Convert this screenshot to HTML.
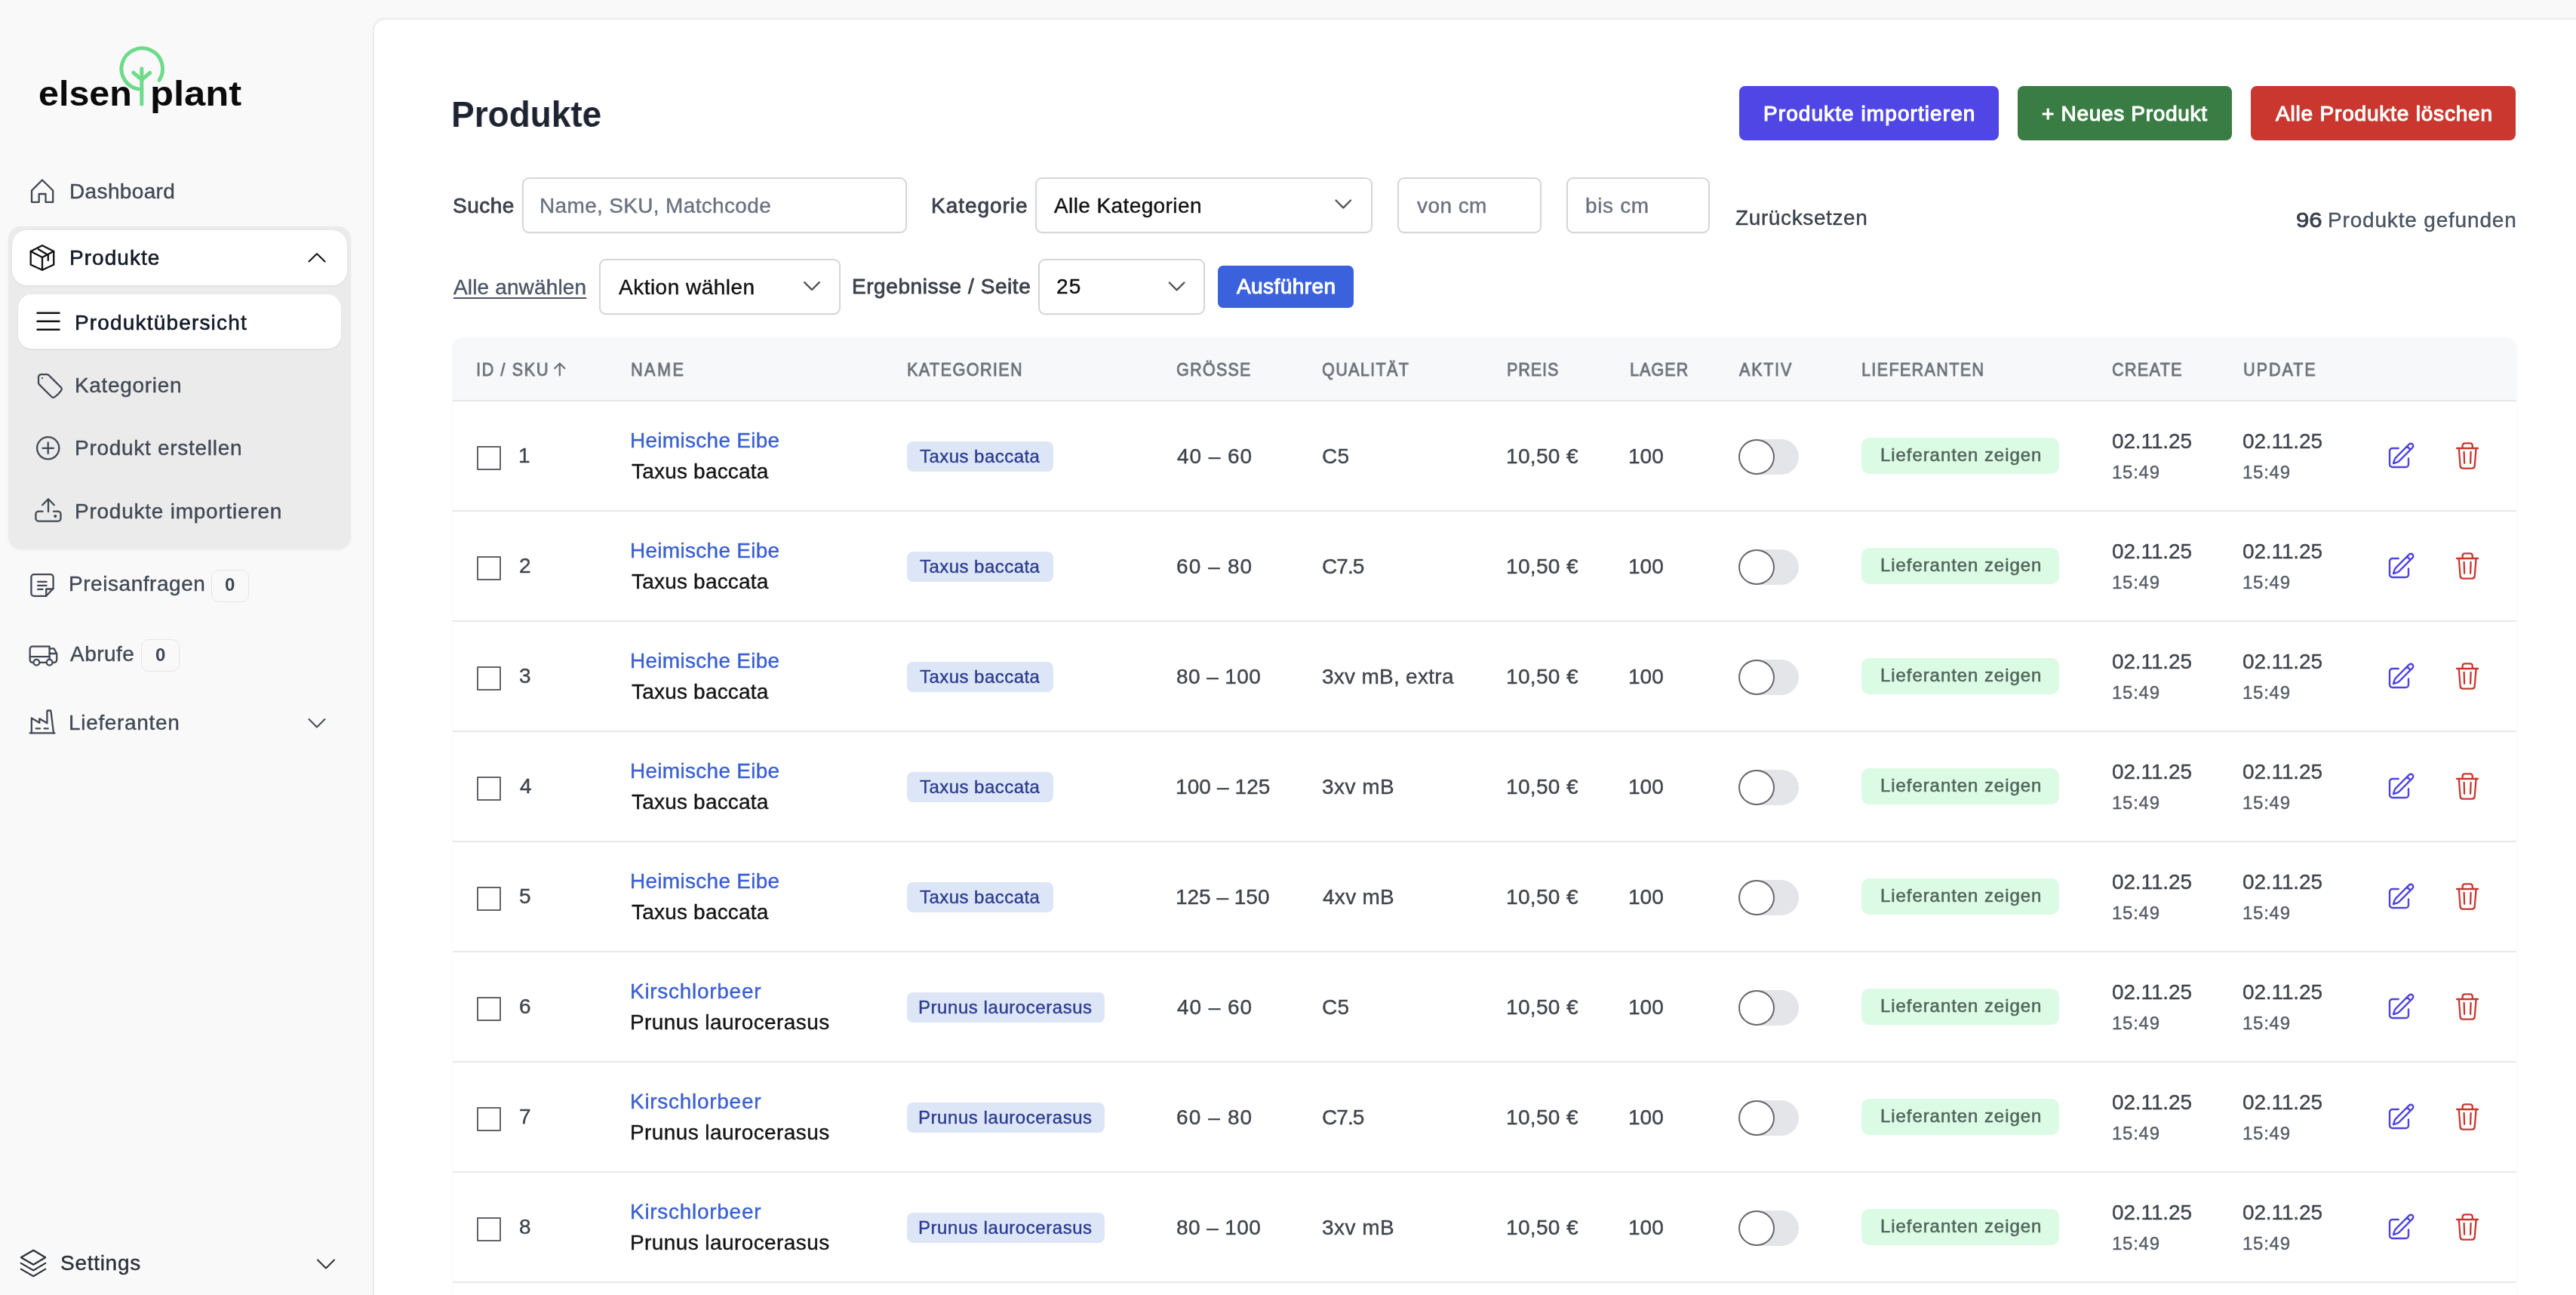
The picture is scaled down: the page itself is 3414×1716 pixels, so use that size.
<!DOCTYPE html>
<html><head><meta charset="utf-8"><title>Produkte</title>
<style>
html,body{margin:0;padding:0;}
body{width:3414px;height:1716px;overflow:hidden;position:relative;background:#f9f9f9;font-family:"Liberation Sans", sans-serif;-webkit-font-smoothing:antialiased;}
.t{position:absolute;white-space:pre;will-change:transform;}
</style></head><body>
<svg style="position:absolute;left:0;top:0;overflow:visible" width="1" height="1" fill="none" stroke="#6edb8a" stroke-width="5" stroke-linecap="round" stroke-linejoin="round"><path d="M183.5 118.1 A 27.3 27.3 0 1 1 211.1 106.1"/><path d="M187.8 91V138"/><path d="M176.8 96.5L187.8 105.5L198.8 96.5"/></svg>
<div class="t" style="left:50.55px;top:77.70px;height:92px;line-height:92px;font-size:46px;font-weight:bold;color:#0b0b0b;letter-spacing:0.000px;transform:scaleX(1.0530);transform-origin:0 0;">elsen</div>
<div class="t" style="left:199.19px;top:77.70px;height:92px;line-height:92px;font-size:46px;font-weight:bold;color:#0b0b0b;letter-spacing:0.000px;transform:scaleX(1.1027);transform-origin:0 0;">plant</div>
<svg style="position:absolute;left:0;top:0;overflow:visible" width="1" height="1" fill="none" stroke="#414855" stroke-width="2.3" stroke-linecap="round" stroke-linejoin="round"><path d="M42 252.5L56 238.5L70.2 252.5V267.8H60.5V257H51.7V267.8H42Z"/></svg>
<div class="t" style="left:92.27px;top:226.10px;height:56px;line-height:56px;font-size:28px;font-weight:normal;color:#414855;letter-spacing:0.362px;-webkit-text-stroke:0.4px #414855;">Dashboard</div>
<div style="position:absolute;left:11px;top:300px;width:454px;height:428px;background:#ebebeb;border-radius:17px;box-shadow:0 1px 4px rgba(0,0,0,.04);"></div>
<div style="position:absolute;left:16px;top:305px;width:444px;height:73px;background:#fff;border-radius:20px;box-shadow:0 1px 3px rgba(0,0,0,.07);"></div>
<svg style="position:absolute;left:0;top:0;overflow:visible" width="1" height="1" fill="none" stroke="#111" stroke-width="2.3" stroke-linecap="round" stroke-linejoin="round"><path d="M56 325.2L71.2 333V350.8L56 357.8L40.7 350.8V333Z"/><path d="M40.7 333L56 341L71.2 333M56 341V357.8"/><path d="M50.8 330.3L63.8 338V345"/></svg>
<div class="t" style="left:92.30px;top:314.10px;height:56px;line-height:56px;font-size:28px;font-weight:normal;color:#111827;letter-spacing:1.043px;-webkit-text-stroke:0.6px #111827;">Produkte</div>
<svg style="position:absolute;left:0;top:0;overflow:visible" width="1" height="1" fill="none" stroke="#111" stroke-width="2" stroke-linecap="round" stroke-linejoin="round"><path d="M409.5 346.5L420 336.3L430.5 346.5"/></svg>
<div style="position:absolute;left:24px;top:390px;width:428px;height:72px;background:#fff;border-radius:18px;box-shadow:0 1px 3px rgba(0,0,0,.07);"></div>
<svg style="position:absolute;left:0;top:0;overflow:visible" width="1" height="1" fill="none" stroke="#111" stroke-width="2.4" stroke-linecap="round" stroke-linejoin="round"><path d="M49.5 414.8H78.5M49.5 425.8H78.5M49.5 436.8H78.5"/></svg>
<div class="t" style="left:99.30px;top:399.50px;height:56px;line-height:56px;font-size:28px;font-weight:normal;color:#111827;letter-spacing:1.171px;-webkit-text-stroke:0.6px #111827;">Produktübersicht</div>
<svg style="position:absolute;left:46px;top:491px;overflow:visible" width="40" height="40" viewBox="0 0 24 24" fill="none" stroke="#414855" stroke-width="1.35" stroke-linecap="round" stroke-linejoin="round"><path d="M9.568 3H5.25A2.25 2.25 0 0 0 3 5.25v4.318c0 .597.237 1.17.659 1.591l9.581 9.581c.699.699 1.78.872 2.607.33a18.095 18.095 0 0 0 5.223-5.223c.542-.827.369-1.908-.33-2.607L11.16 3.66A2.25 2.25 0 0 0 9.568 3Z"/><path d="M6 6h.008v.008H6V6Z"/></svg>
<div class="t" style="left:99.20px;top:482.50px;height:56px;line-height:56px;font-size:28px;font-weight:normal;color:#414855;letter-spacing:0.671px;-webkit-text-stroke:0.4px #414855;">Kategorien</div>
<svg style="position:absolute;left:0;top:0;overflow:visible" width="1" height="1" fill="none" stroke="#414855" stroke-width="2.3" stroke-linecap="round" stroke-linejoin="round"><circle cx="63.7" cy="593.8" r="14.6"/><path d="M63.7 586.5V601.1M56.4 593.8H71"/></svg>
<div class="t" style="left:99.20px;top:566.20px;height:56px;line-height:56px;font-size:28px;font-weight:normal;color:#414855;letter-spacing:0.716px;-webkit-text-stroke:0.4px #414855;">Produkt erstellen</div>
<svg style="position:absolute;left:0;top:0;overflow:visible" width="1" height="1" fill="none" stroke="#414855" stroke-width="2.3" stroke-linecap="round" stroke-linejoin="round"><path d="M56.6 677.7H51A3.6 3.6 0 0 0 47.4 681.3V687A3.6 3.6 0 0 0 51 690.6H76.9A3.6 3.6 0 0 0 80.5 687V681.3A3.6 3.6 0 0 0 76.9 677.7H71"/><path d="M64 678V661.5M56.2 669.3L64 661.3L71.8 669.3"/><circle cx="73.3" cy="684" r="0.9" fill="#414855"/></svg>
<div class="t" style="left:99.20px;top:649.90px;height:56px;line-height:56px;font-size:28px;font-weight:normal;color:#414855;letter-spacing:0.762px;-webkit-text-stroke:0.4px #414855;">Produkte importieren</div>
<svg style="position:absolute;left:0;top:0;overflow:visible" width="1" height="1" fill="none" stroke="#414855" stroke-width="2.3" stroke-linecap="round" stroke-linejoin="round"><path d="M61.2 789.8H45A3.6 3.6 0 0 1 41.4 786.2V764.8A3.6 3.6 0 0 1 45 761.2H67A3.6 3.6 0 0 1 70.6 764.8V779.8Z"/><path d="M61.2 789.5V780.5H70.4"/><path d="M50.2 770.9H61.6M50.2 775.9H61.6M50.2 780.9H56.5"/></svg>
<div class="t" style="left:91.20px;top:746.30px;height:56px;line-height:56px;font-size:28px;font-weight:normal;color:#414855;letter-spacing:0.545px;-webkit-text-stroke:0.4px #414855;">Preisanfragen</div>
<div style="position:absolute;left:279.5px;top:754.6px;width:50.5px;height:43px;border:1.5px solid #e6e6e6;border-radius:10px;box-sizing:border-box;"></div>
<div class="t" style="left:297.70px;top:751.30px;height:48px;line-height:48px;font-size:24px;font-weight:bold;color:#414855;letter-spacing:0.000px;">0</div>
<svg style="position:absolute;left:0;top:0;overflow:visible" width="1" height="1" fill="none" stroke="#414855" stroke-width="2.3" stroke-linecap="round" stroke-linejoin="round"><path d="M48 877.8H43A3.3 3.3 0 0 1 39.7 874.5V860A3.3 3.3 0 0 1 43 856.7H65.6V877.8"/><path d="M39.7 870.2H65.6"/><path d="M65.6 859.4H71.5L75.2 866V874.5A3.3 3.3 0 0 1 71.9 877.8H69.8"/><path d="M65.6 866H75"/><circle cx="48.4" cy="877.8" r="3.9" fill="#f9f9f9"/><circle cx="65.6" cy="877.8" r="3.9" fill="#f9f9f9"/><path d="M52.3 877.8H61.7"/></svg>
<div class="t" style="left:93.20px;top:838.50px;height:56px;line-height:56px;font-size:28px;font-weight:normal;color:#414855;letter-spacing:0.475px;-webkit-text-stroke:0.4px #414855;">Abrufe</div>
<div style="position:absolute;left:187.4px;top:847px;width:51px;height:42.5px;border:1.5px solid #e6e6e6;border-radius:10px;box-sizing:border-box;"></div>
<div class="t" style="left:206.00px;top:843.50px;height:48px;line-height:48px;font-size:24px;font-weight:bold;color:#414855;letter-spacing:0.000px;">0</div>
<svg style="position:absolute;left:0;top:0;overflow:visible" width="1" height="1" fill="none" stroke="#414855" stroke-width="2.3" stroke-linecap="round" stroke-linejoin="round"><path d="M39.5 971.3H72.5"/><path d="M41.8 971.3V951.5L52.3 957.8V952.3L62.4 958.3V942.5A1 1 0 0 1 63.4 941.5H66.5A1 1 0 0 1 67.5 942.4L71 971.3"/><path d="M47.8 965.3H53M58.6 965.3H63.8"/></svg>
<div class="t" style="left:91.20px;top:929.50px;height:56px;line-height:56px;font-size:28px;font-weight:normal;color:#414855;letter-spacing:0.676px;-webkit-text-stroke:0.4px #414855;">Lieferanten</div>
<svg style="position:absolute;left:0;top:0;overflow:visible" width="1" height="1" fill="none" stroke="#414855" stroke-width="2" stroke-linecap="round" stroke-linejoin="round"><path d="M409.5 953L420 963.5L430.5 953"/></svg>
<svg style="position:absolute;left:0;top:0;overflow:visible" width="1" height="1" fill="none" stroke="#2b2f36" stroke-width="2.2" stroke-linecap="round" stroke-linejoin="round"><path d="M44.3 1656.8L60.2 1666.3L44.3 1675.7L27.8 1666.3Z"/><path d="M27.8 1673.9L44.3 1683.4L60.2 1673.9"/><path d="M27.8 1681.6L44.3 1691.1L60.2 1681.6"/></svg>
<div class="t" style="left:80.20px;top:1645.90px;height:56px;line-height:56px;font-size:28px;font-weight:normal;color:#2b2f36;letter-spacing:0.718px;-webkit-text-stroke:0.4px #2b2f36;">Settings</div>
<svg style="position:absolute;left:0;top:0;overflow:visible" width="1" height="1" fill="none" stroke="#2b2f36" stroke-width="2" stroke-linecap="round" stroke-linejoin="round"><path d="M421 1669.5L432 1680.5L443 1669.5"/></svg>
<div style="position:absolute;left:494px;top:23.5px;width:3000px;height:1800px;background:#fff;border:2px solid #ececec;border-top-left-radius:17px;box-sizing:border-box;box-shadow:-1px 0 5px rgba(0,0,0,.03)"></div>
<div class="t" style="left:598.18px;top:102.10px;height:98px;line-height:98px;font-size:49px;font-weight:bold;color:#1d2330;letter-spacing:0.000px;transform:scaleX(0.9384);transform-origin:0 0;">Produkte</div>
<div style="position:absolute;left:2305px;top:114px;width:344px;height:71.6px;background:#4f46e5;border-radius:8px;"></div>
<div class="t" style="left:2336.65px;top:122.70px;height:56px;line-height:56px;font-size:28px;font-weight:normal;color:#fff;letter-spacing:1.077px;-webkit-text-stroke:1.1px #fff;">Produkte importieren</div>
<div style="position:absolute;left:2674px;top:114px;width:284px;height:71.6px;background:#3a7d44;border-radius:8px;"></div>
<div class="t" style="left:2705.95px;top:122.70px;height:56px;line-height:56px;font-size:28px;font-weight:normal;color:#fff;letter-spacing:0.688px;-webkit-text-stroke:1.1px #fff;">+ Neues Produkt</div>
<div style="position:absolute;left:2983px;top:114px;width:351px;height:71.6px;background:#c9372f;border-radius:8px;"></div>
<div class="t" style="left:3015.55px;top:122.70px;height:56px;line-height:56px;font-size:28px;font-weight:normal;color:#fff;letter-spacing:0.812px;-webkit-text-stroke:1.1px #fff;">Alle Produkte löschen</div>
<div class="t" style="left:600.40px;top:244.50px;height:56px;line-height:56px;font-size:28px;font-weight:normal;color:#3b414c;letter-spacing:0.470px;-webkit-text-stroke:0.8px #3b414c;">Suche</div>
<div style="position:absolute;left:692px;top:235px;width:510px;height:74px;background:#fff;border:2px solid #d6d6d9;border-radius:9px;box-sizing:border-box;box-shadow:0 1px 2px rgba(0,0,0,.04)"></div>
<div class="t" style="left:715.20px;top:245.00px;height:56px;line-height:56px;font-size:28px;font-weight:normal;color:#6b7280;letter-spacing:0.338px;-webkit-text-stroke:0.4px #6b7280;">Name, SKU, Matchcode</div>
<div class="t" style="left:1234.10px;top:244.80px;height:56px;line-height:56px;font-size:28px;font-weight:normal;color:#3b414c;letter-spacing:0.964px;-webkit-text-stroke:0.8px #3b414c;">Kategorie</div>
<div style="position:absolute;left:1372px;top:235px;width:447px;height:74px;background:#fff;border:2px solid #d6d6d9;border-radius:9px;box-sizing:border-box;box-shadow:0 1px 2px rgba(0,0,0,.04)"></div>
<div class="t" style="left:1397.20px;top:244.80px;height:56px;line-height:56px;font-size:28px;font-weight:normal;color:#111;letter-spacing:0.398px;-webkit-text-stroke:0.4px #111;">Alle Kategorien</div>
<svg style="position:absolute;left:0;top:0;overflow:visible" width="1" height="1" fill="none" stroke="#52525b" stroke-width="2.4" stroke-linecap="round" stroke-linejoin="round"><path d="M1770.5 265.5L1780.3 275.3L1790 265.5"/></svg>
<div style="position:absolute;left:1851.5px;top:234.6px;width:191px;height:74.6px;background:#fff;border:2px solid #d6d6d9;border-radius:9px;box-sizing:border-box;box-shadow:0 1px 2px rgba(0,0,0,.04)"></div>
<div class="t" style="left:1878.10px;top:245.30px;height:56px;line-height:56px;font-size:28px;font-weight:normal;color:#6b7280;letter-spacing:0.435px;-webkit-text-stroke:0.4px #6b7280;">von cm</div>
<div style="position:absolute;left:2075.7px;top:234.6px;width:190.3px;height:74.6px;background:#fff;border:2px solid #d6d6d9;border-radius:9px;box-sizing:border-box;box-shadow:0 1px 2px rgba(0,0,0,.04)"></div>
<div class="t" style="left:2101.10px;top:245.30px;height:56px;line-height:56px;font-size:28px;font-weight:normal;color:#6b7280;letter-spacing:0.646px;-webkit-text-stroke:0.4px #6b7280;">bis cm</div>
<div class="t" style="left:2300.10px;top:260.60px;height:56px;line-height:56px;font-size:28px;font-weight:normal;color:#3b414c;letter-spacing:0.619px;-webkit-text-stroke:0.4px #3b414c;">Zurücksetzen</div>
<div class="t" style="left:3042.99px;top:263.50px;height:56px;line-height:56px;font-size:28px;font-weight:normal;color:#3b414c;letter-spacing:0.000px;-webkit-text-stroke:0.8px #3b414c;transform:scaleX(1.1091);transform-origin:0 0;">96</div>
<div class="t" style="left:3084.60px;top:263.50px;height:56px;line-height:56px;font-size:28px;font-weight:normal;color:#4b5563;letter-spacing:0.821px;-webkit-text-stroke:0.4px #4b5563;">Produkte gefunden</div>
<div class="t" style="left:601.20px;top:352.50px;height:56px;line-height:56px;font-size:28px;font-weight:normal;color:#4b5563;letter-spacing:0.144px;-webkit-text-stroke:0.4px #4b5563;text-decoration:underline;text-underline-offset:4px;text-decoration-thickness:2px">Alle anwählen</div>
<div style="position:absolute;left:794px;top:343px;width:320px;height:73.5px;background:#fff;border:2px solid #d6d6d9;border-radius:9px;box-sizing:border-box;box-shadow:0 1px 2px rgba(0,0,0,.04)"></div>
<div class="t" style="left:819.60px;top:352.50px;height:56px;line-height:56px;font-size:28px;font-weight:normal;color:#111;letter-spacing:0.487px;-webkit-text-stroke:0.4px #111;">Aktion wählen</div>
<svg style="position:absolute;left:0;top:0;overflow:visible" width="1" height="1" fill="none" stroke="#52525b" stroke-width="2.4" stroke-linecap="round" stroke-linejoin="round"><path d="M1066.2 374.2L1076 384L1085.8 374.2"/></svg>
<div class="t" style="left:1129.40px;top:351.90px;height:56px;line-height:56px;font-size:28px;font-weight:normal;color:#3b414c;letter-spacing:0.561px;-webkit-text-stroke:0.8px #3b414c;">Ergebnisse / Seite</div>
<div style="position:absolute;left:1375.5px;top:343px;width:221.5px;height:73.8px;background:#fff;border:2px solid #d6d6d9;border-radius:9px;box-sizing:border-box;box-shadow:0 1px 2px rgba(0,0,0,.04)"></div>
<div class="t" style="left:1400.40px;top:351.90px;height:56px;line-height:56px;font-size:28px;font-weight:normal;color:#111;letter-spacing:1.128px;-webkit-text-stroke:0.4px #111;">25</div>
<svg style="position:absolute;left:0;top:0;overflow:visible" width="1" height="1" fill="none" stroke="#52525b" stroke-width="2.4" stroke-linecap="round" stroke-linejoin="round"><path d="M1549.8 374.5L1559.6 384.3L1569.4 374.5"/></svg>
<div style="position:absolute;left:1614px;top:352px;width:180px;height:55.5px;background:#3b62dc;border-radius:7px;"></div>
<div class="t" style="left:1639.30px;top:351.90px;height:56px;line-height:56px;font-size:28px;font-weight:normal;color:#fff;letter-spacing:0.429px;-webkit-text-stroke:1.0px #fff;">Ausführen</div>
<div style="position:absolute;left:599.6px;top:448px;width:2735.2000000000003px;height:1400px;background:#fff;border-radius:14px 14px 0 0;box-shadow:0 0 3px rgba(0,0,0,.06)"></div>
<div style="position:absolute;left:599.6px;top:448px;width:2735.2000000000003px;height:84px;background:#f6f8f9;border-radius:14px 14px 0 0;border-bottom:2px solid #e6e7ea;box-sizing:border-box"></div>
<div class="t" style="left:631.30px;top:465.50px;height:48px;line-height:48px;font-size:24px;font-weight:normal;color:#6b7079;letter-spacing:1.807px;-webkit-text-stroke:0.8px #6b7079;transform:scaleX(0.9000);transform-origin:0 0;">ID / SKU</div>
<div class="t" style="left:836.00px;top:465.50px;height:48px;line-height:48px;font-size:24px;font-weight:normal;color:#6b7079;letter-spacing:2.778px;-webkit-text-stroke:0.8px #6b7079;transform:scaleX(0.9000);transform-origin:0 0;">NAME</div>
<div class="t" style="left:1202.10px;top:465.50px;height:48px;line-height:48px;font-size:24px;font-weight:normal;color:#6b7079;letter-spacing:1.565px;-webkit-text-stroke:0.8px #6b7079;transform:scaleX(0.9000);transform-origin:0 0;">KATEGORIEN</div>
<div class="t" style="left:1558.90px;top:465.50px;height:48px;line-height:48px;font-size:24px;font-weight:normal;color:#6b7079;letter-spacing:1.330px;-webkit-text-stroke:0.8px #6b7079;transform:scaleX(0.9000);transform-origin:0 0;">GRÖSSE</div>
<div class="t" style="left:1751.80px;top:465.50px;height:48px;line-height:48px;font-size:24px;font-weight:normal;color:#6b7079;letter-spacing:1.489px;-webkit-text-stroke:0.8px #6b7079;transform:scaleX(0.9000);transform-origin:0 0;">QUALITÄT</div>
<div class="t" style="left:1997.20px;top:465.50px;height:48px;line-height:48px;font-size:24px;font-weight:normal;color:#6b7079;letter-spacing:0.968px;-webkit-text-stroke:0.8px #6b7079;transform:scaleX(0.9000);transform-origin:0 0;">PREIS</div>
<div class="t" style="left:2159.50px;top:465.50px;height:48px;line-height:48px;font-size:24px;font-weight:normal;color:#6b7079;letter-spacing:1.103px;-webkit-text-stroke:0.8px #6b7079;transform:scaleX(0.9000);transform-origin:0 0;">LAGER</div>
<div class="t" style="left:2305.10px;top:465.50px;height:48px;line-height:48px;font-size:24px;font-weight:normal;color:#6b7079;letter-spacing:1.886px;-webkit-text-stroke:0.8px #6b7079;transform:scaleX(0.9000);transform-origin:0 0;">AKTIV</div>
<div class="t" style="left:2467.10px;top:465.50px;height:48px;line-height:48px;font-size:24px;font-weight:normal;color:#6b7079;letter-spacing:1.475px;-webkit-text-stroke:0.8px #6b7079;transform:scaleX(0.9000);transform-origin:0 0;">LIEFERANTEN</div>
<div class="t" style="left:2799.00px;top:465.50px;height:48px;line-height:48px;font-size:24px;font-weight:normal;color:#6b7079;letter-spacing:1.444px;-webkit-text-stroke:0.8px #6b7079;transform:scaleX(0.9000);transform-origin:0 0;">CREATE</div>
<div class="t" style="left:2972.50px;top:465.50px;height:48px;line-height:48px;font-size:24px;font-weight:normal;color:#6b7079;letter-spacing:2.155px;-webkit-text-stroke:0.8px #6b7079;transform:scaleX(0.9000);transform-origin:0 0;">UPDATE</div>
<svg style="position:absolute;left:0;top:0;overflow:visible" width="1" height="1" fill="none" stroke="#6b7079" stroke-width="2.2" stroke-linecap="round" stroke-linejoin="round"><path d="M741.8 497.5V481.5M735.3 488L741.8 481.5L748.3 488"/></svg>
<div style="position:absolute;left:599.6px;top:676px;width:2735.2000000000003px;height:2px;background:#e7e8eb"></div>
<div style="position:absolute;left:632px;top:591.4px;width:32px;height:31.5px;border:2px solid #626368;box-sizing:border-box;border-radius:1px;background:#fff"></div>
<div class="t" style="left:686.50px;top:576.30px;height:56px;line-height:56px;font-size:28px;font-weight:normal;color:#40454d;letter-spacing:0.000px;-webkit-text-stroke:0.4px #40454d;">1</div>
<div class="t" style="left:835.00px;top:555.90px;height:56px;line-height:56px;font-size:28px;font-weight:normal;color:#3b60d2;letter-spacing:0.281px;-webkit-text-stroke:0.4px #3b60d2;">Heimische Eibe</div>
<div class="t" style="left:837.00px;top:596.60px;height:56px;line-height:56px;font-size:28px;font-weight:normal;color:#141414;letter-spacing:0.198px;-webkit-text-stroke:0.4px #141414;">Taxus baccata</div>
<div style="position:absolute;left:1202.3px;top:585.3px;width:193.6px;height:39.4px;background:#dde6f7;border-radius:8px"></div>
<div class="t" style="left:1218.90px;top:580.50px;height:48px;line-height:48px;font-size:24px;font-weight:normal;color:#2c3c8e;letter-spacing:0.460px;-webkit-text-stroke:0.4px #2c3c8e;">Taxus baccata</div>
<div class="t" style="left:1560.40px;top:576.50px;height:56px;line-height:56px;font-size:28px;font-weight:normal;color:#40454d;letter-spacing:0.959px;-webkit-text-stroke:0.4px #40454d;">40 – 60</div>
<div class="t" style="left:1751.50px;top:576.50px;height:56px;line-height:56px;font-size:28px;font-weight:normal;color:#40454d;letter-spacing:0.379px;-webkit-text-stroke:0.4px #40454d;">C5</div>
<div class="t" style="left:1995.90px;top:576.50px;height:56px;line-height:56px;font-size:28px;font-weight:normal;color:#40454d;letter-spacing:0.342px;-webkit-text-stroke:0.4px #40454d;">10,50 €</div>
<div class="t" style="left:2158.20px;top:576.50px;height:56px;line-height:56px;font-size:28px;font-weight:normal;color:#40454d;letter-spacing:0.028px;-webkit-text-stroke:0.4px #40454d;">100</div>
<div style="position:absolute;left:2304.2px;top:582px;width:79.6px;height:47px;background:#e4e5e9;border-radius:24px"></div>
<div style="position:absolute;left:2304.2px;top:582.2px;width:47.5px;height:47px;background:#fff;border:2.2px solid #66666b;border-radius:50%;box-sizing:border-box"></div>
<div style="position:absolute;left:2467px;top:580px;width:262px;height:47.5px;background:#dcfbe5;border-radius:10px"></div>
<div class="t" style="left:2491.68px;top:579.30px;height:48px;line-height:48px;font-size:24px;font-weight:normal;color:#52665c;letter-spacing:0.930px;-webkit-text-stroke:0.55px #52665c;">Lieferanten zeigen</div>
<div class="t" style="left:2798.70px;top:556.50px;height:56px;line-height:56px;font-size:28px;font-weight:normal;color:#40454d;letter-spacing:-0.135px;-webkit-text-stroke:0.4px #40454d;">02.11.25</div>
<div class="t" style="left:2798.70px;top:601.50px;height:48px;line-height:48px;font-size:24px;font-weight:normal;color:#585e68;letter-spacing:0.747px;-webkit-text-stroke:0.4px #585e68;">15:49</div>
<div class="t" style="left:2972.20px;top:556.50px;height:56px;line-height:56px;font-size:28px;font-weight:normal;color:#40454d;letter-spacing:-0.135px;-webkit-text-stroke:0.4px #40454d;">02.11.25</div>
<div class="t" style="left:2972.20px;top:601.50px;height:48px;line-height:48px;font-size:24px;font-weight:normal;color:#585e68;letter-spacing:0.747px;-webkit-text-stroke:0.4px #585e68;">15:49</div>
<svg style="position:absolute;left:3162px;top:583.5px;overflow:visible" width="40" height="40" viewBox="0 0 24 24" fill="none" stroke="#4f44de" stroke-width="1.45" stroke-linecap="round" stroke-linejoin="round"><path d="m16.862 4.487 1.687-1.688a1.875 1.875 0 1 1 2.652 2.652L10.582 16.07a4.5 4.5 0 0 1-1.897 1.13L6 18l.8-2.685a4.5 4.5 0 0 1 1.13-1.897l8.932-8.931Zm0 0L19.5 7.125M18 14v4.75A2.25 2.25 0 0 1 15.75 21H5.25A2.25 2.25 0 0 1 3 18.75V8.25A2.25 2.25 0 0 1 5.25 6H10"/></svg>
<svg style="position:absolute;left:0;top:0;overflow:visible" width="1" height="1" fill="none" stroke="#c9372f" stroke-width="2.3" stroke-linecap="round" stroke-linejoin="round"><path d="M3256 594H3284"/><path d="M3258.8 594L3260.6 617.5A3.5 3.5 0 0 0 3264.1 620.6H3276.2A3.5 3.5 0 0 0 3279.7 617.5L3281.6 594"/><path d="M3263.6 593.5V590.5A3.3 3.3 0 0 1 3266.9 587.4H3273.5A3.3 3.3 0 0 1 3276.8 590.5V593.5"/><path d="M3265.6 599L3266.1 613.8M3274.6 599L3274.1 613.8"/></svg>
<div style="position:absolute;left:599.6px;top:822px;width:2735.2000000000003px;height:2px;background:#e7e8eb"></div>
<div style="position:absolute;left:632px;top:737.4px;width:32px;height:31.5px;border:2px solid #626368;box-sizing:border-box;border-radius:1px;background:#fff"></div>
<div class="t" style="left:687.50px;top:722.30px;height:56px;line-height:56px;font-size:28px;font-weight:normal;color:#40454d;letter-spacing:0.000px;-webkit-text-stroke:0.4px #40454d;">2</div>
<div class="t" style="left:835.00px;top:701.90px;height:56px;line-height:56px;font-size:28px;font-weight:normal;color:#3b60d2;letter-spacing:0.281px;-webkit-text-stroke:0.4px #3b60d2;">Heimische Eibe</div>
<div class="t" style="left:837.00px;top:742.60px;height:56px;line-height:56px;font-size:28px;font-weight:normal;color:#141414;letter-spacing:0.198px;-webkit-text-stroke:0.4px #141414;">Taxus baccata</div>
<div style="position:absolute;left:1202.3px;top:731.3px;width:193.6px;height:39.4px;background:#dde6f7;border-radius:8px"></div>
<div class="t" style="left:1218.90px;top:726.50px;height:48px;line-height:48px;font-size:24px;font-weight:normal;color:#2c3c8e;letter-spacing:0.460px;-webkit-text-stroke:0.4px #2c3c8e;">Taxus baccata</div>
<div class="t" style="left:1559.40px;top:722.50px;height:56px;line-height:56px;font-size:28px;font-weight:normal;color:#40454d;letter-spacing:1.125px;-webkit-text-stroke:0.4px #40454d;">60 – 80</div>
<div class="t" style="left:1751.50px;top:722.50px;height:56px;line-height:56px;font-size:28px;font-weight:normal;color:#40454d;letter-spacing:-0.924px;-webkit-text-stroke:0.4px #40454d;">C7.5</div>
<div class="t" style="left:1995.90px;top:722.50px;height:56px;line-height:56px;font-size:28px;font-weight:normal;color:#40454d;letter-spacing:0.342px;-webkit-text-stroke:0.4px #40454d;">10,50 €</div>
<div class="t" style="left:2158.20px;top:722.50px;height:56px;line-height:56px;font-size:28px;font-weight:normal;color:#40454d;letter-spacing:0.028px;-webkit-text-stroke:0.4px #40454d;">100</div>
<div style="position:absolute;left:2304.2px;top:728px;width:79.6px;height:47px;background:#e4e5e9;border-radius:24px"></div>
<div style="position:absolute;left:2304.2px;top:728.2px;width:47.5px;height:47px;background:#fff;border:2.2px solid #66666b;border-radius:50%;box-sizing:border-box"></div>
<div style="position:absolute;left:2467px;top:726px;width:262px;height:47.5px;background:#dcfbe5;border-radius:10px"></div>
<div class="t" style="left:2491.68px;top:725.30px;height:48px;line-height:48px;font-size:24px;font-weight:normal;color:#52665c;letter-spacing:0.930px;-webkit-text-stroke:0.55px #52665c;">Lieferanten zeigen</div>
<div class="t" style="left:2798.70px;top:702.50px;height:56px;line-height:56px;font-size:28px;font-weight:normal;color:#40454d;letter-spacing:-0.135px;-webkit-text-stroke:0.4px #40454d;">02.11.25</div>
<div class="t" style="left:2798.70px;top:747.50px;height:48px;line-height:48px;font-size:24px;font-weight:normal;color:#585e68;letter-spacing:0.747px;-webkit-text-stroke:0.4px #585e68;">15:49</div>
<div class="t" style="left:2972.20px;top:702.50px;height:56px;line-height:56px;font-size:28px;font-weight:normal;color:#40454d;letter-spacing:-0.135px;-webkit-text-stroke:0.4px #40454d;">02.11.25</div>
<div class="t" style="left:2972.20px;top:747.50px;height:48px;line-height:48px;font-size:24px;font-weight:normal;color:#585e68;letter-spacing:0.747px;-webkit-text-stroke:0.4px #585e68;">15:49</div>
<svg style="position:absolute;left:3162px;top:729.5px;overflow:visible" width="40" height="40" viewBox="0 0 24 24" fill="none" stroke="#4f44de" stroke-width="1.45" stroke-linecap="round" stroke-linejoin="round"><path d="m16.862 4.487 1.687-1.688a1.875 1.875 0 1 1 2.652 2.652L10.582 16.07a4.5 4.5 0 0 1-1.897 1.13L6 18l.8-2.685a4.5 4.5 0 0 1 1.13-1.897l8.932-8.931Zm0 0L19.5 7.125M18 14v4.75A2.25 2.25 0 0 1 15.75 21H5.25A2.25 2.25 0 0 1 3 18.75V8.25A2.25 2.25 0 0 1 5.25 6H10"/></svg>
<svg style="position:absolute;left:0;top:0;overflow:visible" width="1" height="1" fill="none" stroke="#c9372f" stroke-width="2.3" stroke-linecap="round" stroke-linejoin="round"><path d="M3256 740H3284"/><path d="M3258.8 740L3260.6 763.5A3.5 3.5 0 0 0 3264.1 766.6H3276.2A3.5 3.5 0 0 0 3279.7 763.5L3281.6 740"/><path d="M3263.6 739.5V736.5A3.3 3.3 0 0 1 3266.9 733.4H3273.5A3.3 3.3 0 0 1 3276.8 736.5V739.5"/><path d="M3265.6 745L3266.1 759.8M3274.6 745L3274.1 759.8"/></svg>
<div style="position:absolute;left:599.6px;top:968px;width:2735.2000000000003px;height:2px;background:#e7e8eb"></div>
<div style="position:absolute;left:632px;top:883.4px;width:32px;height:31.5px;border:2px solid #626368;box-sizing:border-box;border-radius:1px;background:#fff"></div>
<div class="t" style="left:687.50px;top:868.30px;height:56px;line-height:56px;font-size:28px;font-weight:normal;color:#40454d;letter-spacing:0.000px;-webkit-text-stroke:0.4px #40454d;">3</div>
<div class="t" style="left:835.00px;top:847.90px;height:56px;line-height:56px;font-size:28px;font-weight:normal;color:#3b60d2;letter-spacing:0.281px;-webkit-text-stroke:0.4px #3b60d2;">Heimische Eibe</div>
<div class="t" style="left:837.00px;top:888.60px;height:56px;line-height:56px;font-size:28px;font-weight:normal;color:#141414;letter-spacing:0.198px;-webkit-text-stroke:0.4px #141414;">Taxus baccata</div>
<div style="position:absolute;left:1202.3px;top:877.3px;width:193.6px;height:39.4px;background:#dde6f7;border-radius:8px"></div>
<div class="t" style="left:1218.90px;top:872.50px;height:48px;line-height:48px;font-size:24px;font-weight:normal;color:#2c3c8e;letter-spacing:0.460px;-webkit-text-stroke:0.4px #2c3c8e;">Taxus baccata</div>
<div class="t" style="left:1559.40px;top:868.50px;height:56px;line-height:56px;font-size:28px;font-weight:normal;color:#40454d;letter-spacing:0.411px;-webkit-text-stroke:0.4px #40454d;">80 – 100</div>
<div class="t" style="left:1751.50px;top:868.50px;height:56px;line-height:56px;font-size:28px;font-weight:normal;color:#40454d;letter-spacing:0.276px;-webkit-text-stroke:0.4px #40454d;">3xv mB, extra</div>
<div class="t" style="left:1995.90px;top:868.50px;height:56px;line-height:56px;font-size:28px;font-weight:normal;color:#40454d;letter-spacing:0.342px;-webkit-text-stroke:0.4px #40454d;">10,50 €</div>
<div class="t" style="left:2158.20px;top:868.50px;height:56px;line-height:56px;font-size:28px;font-weight:normal;color:#40454d;letter-spacing:0.028px;-webkit-text-stroke:0.4px #40454d;">100</div>
<div style="position:absolute;left:2304.2px;top:874px;width:79.6px;height:47px;background:#e4e5e9;border-radius:24px"></div>
<div style="position:absolute;left:2304.2px;top:874.2px;width:47.5px;height:47px;background:#fff;border:2.2px solid #66666b;border-radius:50%;box-sizing:border-box"></div>
<div style="position:absolute;left:2467px;top:872px;width:262px;height:47.5px;background:#dcfbe5;border-radius:10px"></div>
<div class="t" style="left:2491.68px;top:871.30px;height:48px;line-height:48px;font-size:24px;font-weight:normal;color:#52665c;letter-spacing:0.930px;-webkit-text-stroke:0.55px #52665c;">Lieferanten zeigen</div>
<div class="t" style="left:2798.70px;top:848.50px;height:56px;line-height:56px;font-size:28px;font-weight:normal;color:#40454d;letter-spacing:-0.135px;-webkit-text-stroke:0.4px #40454d;">02.11.25</div>
<div class="t" style="left:2798.70px;top:893.50px;height:48px;line-height:48px;font-size:24px;font-weight:normal;color:#585e68;letter-spacing:0.747px;-webkit-text-stroke:0.4px #585e68;">15:49</div>
<div class="t" style="left:2972.20px;top:848.50px;height:56px;line-height:56px;font-size:28px;font-weight:normal;color:#40454d;letter-spacing:-0.135px;-webkit-text-stroke:0.4px #40454d;">02.11.25</div>
<div class="t" style="left:2972.20px;top:893.50px;height:48px;line-height:48px;font-size:24px;font-weight:normal;color:#585e68;letter-spacing:0.747px;-webkit-text-stroke:0.4px #585e68;">15:49</div>
<svg style="position:absolute;left:3162px;top:875.5px;overflow:visible" width="40" height="40" viewBox="0 0 24 24" fill="none" stroke="#4f44de" stroke-width="1.45" stroke-linecap="round" stroke-linejoin="round"><path d="m16.862 4.487 1.687-1.688a1.875 1.875 0 1 1 2.652 2.652L10.582 16.07a4.5 4.5 0 0 1-1.897 1.13L6 18l.8-2.685a4.5 4.5 0 0 1 1.13-1.897l8.932-8.931Zm0 0L19.5 7.125M18 14v4.75A2.25 2.25 0 0 1 15.75 21H5.25A2.25 2.25 0 0 1 3 18.75V8.25A2.25 2.25 0 0 1 5.25 6H10"/></svg>
<svg style="position:absolute;left:0;top:0;overflow:visible" width="1" height="1" fill="none" stroke="#c9372f" stroke-width="2.3" stroke-linecap="round" stroke-linejoin="round"><path d="M3256 886H3284"/><path d="M3258.8 886L3260.6 909.5A3.5 3.5 0 0 0 3264.1 912.6H3276.2A3.5 3.5 0 0 0 3279.7 909.5L3281.6 886"/><path d="M3263.6 885.5V882.5A3.3 3.3 0 0 1 3266.9 879.4H3273.5A3.3 3.3 0 0 1 3276.8 882.5V885.5"/><path d="M3265.6 891L3266.1 905.8M3274.6 891L3274.1 905.8"/></svg>
<div style="position:absolute;left:599.6px;top:1114px;width:2735.2000000000003px;height:2px;background:#e7e8eb"></div>
<div style="position:absolute;left:632px;top:1029.4px;width:32px;height:31.5px;border:2px solid #626368;box-sizing:border-box;border-radius:1px;background:#fff"></div>
<div class="t" style="left:688.50px;top:1014.30px;height:56px;line-height:56px;font-size:28px;font-weight:normal;color:#40454d;letter-spacing:0.000px;-webkit-text-stroke:0.4px #40454d;">4</div>
<div class="t" style="left:835.00px;top:993.90px;height:56px;line-height:56px;font-size:28px;font-weight:normal;color:#3b60d2;letter-spacing:0.281px;-webkit-text-stroke:0.4px #3b60d2;">Heimische Eibe</div>
<div class="t" style="left:837.00px;top:1034.60px;height:56px;line-height:56px;font-size:28px;font-weight:normal;color:#141414;letter-spacing:0.198px;-webkit-text-stroke:0.4px #141414;">Taxus baccata</div>
<div style="position:absolute;left:1202.3px;top:1023.3px;width:193.6px;height:39.4px;background:#dde6f7;border-radius:8px"></div>
<div class="t" style="left:1218.90px;top:1018.50px;height:48px;line-height:48px;font-size:24px;font-weight:normal;color:#2c3c8e;letter-spacing:0.460px;-webkit-text-stroke:0.4px #2c3c8e;">Taxus baccata</div>
<div class="t" style="left:1558.40px;top:1014.50px;height:56px;line-height:56px;font-size:28px;font-weight:normal;color:#40454d;letter-spacing:0.101px;-webkit-text-stroke:0.4px #40454d;">100 – 125</div>
<div class="t" style="left:1751.50px;top:1014.50px;height:56px;line-height:56px;font-size:28px;font-weight:normal;color:#40454d;letter-spacing:0.485px;-webkit-text-stroke:0.4px #40454d;">3xv mB</div>
<div class="t" style="left:1995.90px;top:1014.50px;height:56px;line-height:56px;font-size:28px;font-weight:normal;color:#40454d;letter-spacing:0.342px;-webkit-text-stroke:0.4px #40454d;">10,50 €</div>
<div class="t" style="left:2158.20px;top:1014.50px;height:56px;line-height:56px;font-size:28px;font-weight:normal;color:#40454d;letter-spacing:0.028px;-webkit-text-stroke:0.4px #40454d;">100</div>
<div style="position:absolute;left:2304.2px;top:1020px;width:79.6px;height:47px;background:#e4e5e9;border-radius:24px"></div>
<div style="position:absolute;left:2304.2px;top:1020.2px;width:47.5px;height:47px;background:#fff;border:2.2px solid #66666b;border-radius:50%;box-sizing:border-box"></div>
<div style="position:absolute;left:2467px;top:1018px;width:262px;height:47.5px;background:#dcfbe5;border-radius:10px"></div>
<div class="t" style="left:2491.68px;top:1017.30px;height:48px;line-height:48px;font-size:24px;font-weight:normal;color:#52665c;letter-spacing:0.930px;-webkit-text-stroke:0.55px #52665c;">Lieferanten zeigen</div>
<div class="t" style="left:2798.70px;top:994.50px;height:56px;line-height:56px;font-size:28px;font-weight:normal;color:#40454d;letter-spacing:-0.135px;-webkit-text-stroke:0.4px #40454d;">02.11.25</div>
<div class="t" style="left:2798.70px;top:1039.50px;height:48px;line-height:48px;font-size:24px;font-weight:normal;color:#585e68;letter-spacing:0.747px;-webkit-text-stroke:0.4px #585e68;">15:49</div>
<div class="t" style="left:2972.20px;top:994.50px;height:56px;line-height:56px;font-size:28px;font-weight:normal;color:#40454d;letter-spacing:-0.135px;-webkit-text-stroke:0.4px #40454d;">02.11.25</div>
<div class="t" style="left:2972.20px;top:1039.50px;height:48px;line-height:48px;font-size:24px;font-weight:normal;color:#585e68;letter-spacing:0.747px;-webkit-text-stroke:0.4px #585e68;">15:49</div>
<svg style="position:absolute;left:3162px;top:1021.5px;overflow:visible" width="40" height="40" viewBox="0 0 24 24" fill="none" stroke="#4f44de" stroke-width="1.45" stroke-linecap="round" stroke-linejoin="round"><path d="m16.862 4.487 1.687-1.688a1.875 1.875 0 1 1 2.652 2.652L10.582 16.07a4.5 4.5 0 0 1-1.897 1.13L6 18l.8-2.685a4.5 4.5 0 0 1 1.13-1.897l8.932-8.931Zm0 0L19.5 7.125M18 14v4.75A2.25 2.25 0 0 1 15.75 21H5.25A2.25 2.25 0 0 1 3 18.75V8.25A2.25 2.25 0 0 1 5.25 6H10"/></svg>
<svg style="position:absolute;left:0;top:0;overflow:visible" width="1" height="1" fill="none" stroke="#c9372f" stroke-width="2.3" stroke-linecap="round" stroke-linejoin="round"><path d="M3256 1032H3284"/><path d="M3258.8 1032L3260.6 1055.5A3.5 3.5 0 0 0 3264.1 1058.6H3276.2A3.5 3.5 0 0 0 3279.7 1055.5L3281.6 1032"/><path d="M3263.6 1031.5V1028.5A3.3 3.3 0 0 1 3266.9 1025.4H3273.5A3.3 3.3 0 0 1 3276.8 1028.5V1031.5"/><path d="M3265.6 1037L3266.1 1051.8M3274.6 1037L3274.1 1051.8"/></svg>
<div style="position:absolute;left:599.6px;top:1260px;width:2735.2000000000003px;height:2px;background:#e7e8eb"></div>
<div style="position:absolute;left:632px;top:1175.4px;width:32px;height:31.5px;border:2px solid #626368;box-sizing:border-box;border-radius:1px;background:#fff"></div>
<div class="t" style="left:687.50px;top:1160.30px;height:56px;line-height:56px;font-size:28px;font-weight:normal;color:#40454d;letter-spacing:0.000px;-webkit-text-stroke:0.4px #40454d;">5</div>
<div class="t" style="left:835.00px;top:1139.90px;height:56px;line-height:56px;font-size:28px;font-weight:normal;color:#3b60d2;letter-spacing:0.281px;-webkit-text-stroke:0.4px #3b60d2;">Heimische Eibe</div>
<div class="t" style="left:837.00px;top:1180.60px;height:56px;line-height:56px;font-size:28px;font-weight:normal;color:#141414;letter-spacing:0.198px;-webkit-text-stroke:0.4px #141414;">Taxus baccata</div>
<div style="position:absolute;left:1202.3px;top:1169.3px;width:193.6px;height:39.4px;background:#dde6f7;border-radius:8px"></div>
<div class="t" style="left:1218.90px;top:1164.50px;height:48px;line-height:48px;font-size:24px;font-weight:normal;color:#2c3c8e;letter-spacing:0.460px;-webkit-text-stroke:0.4px #2c3c8e;">Taxus baccata</div>
<div class="t" style="left:1558.40px;top:1160.50px;height:56px;line-height:56px;font-size:28px;font-weight:normal;color:#40454d;letter-spacing:-0.012px;-webkit-text-stroke:0.4px #40454d;">125 – 150</div>
<div class="t" style="left:1752.50px;top:1160.50px;height:56px;line-height:56px;font-size:28px;font-weight:normal;color:#40454d;letter-spacing:0.285px;-webkit-text-stroke:0.4px #40454d;">4xv mB</div>
<div class="t" style="left:1995.90px;top:1160.50px;height:56px;line-height:56px;font-size:28px;font-weight:normal;color:#40454d;letter-spacing:0.342px;-webkit-text-stroke:0.4px #40454d;">10,50 €</div>
<div class="t" style="left:2158.20px;top:1160.50px;height:56px;line-height:56px;font-size:28px;font-weight:normal;color:#40454d;letter-spacing:0.028px;-webkit-text-stroke:0.4px #40454d;">100</div>
<div style="position:absolute;left:2304.2px;top:1166px;width:79.6px;height:47px;background:#e4e5e9;border-radius:24px"></div>
<div style="position:absolute;left:2304.2px;top:1166.2px;width:47.5px;height:47px;background:#fff;border:2.2px solid #66666b;border-radius:50%;box-sizing:border-box"></div>
<div style="position:absolute;left:2467px;top:1164px;width:262px;height:47.5px;background:#dcfbe5;border-radius:10px"></div>
<div class="t" style="left:2491.68px;top:1163.30px;height:48px;line-height:48px;font-size:24px;font-weight:normal;color:#52665c;letter-spacing:0.930px;-webkit-text-stroke:0.55px #52665c;">Lieferanten zeigen</div>
<div class="t" style="left:2798.70px;top:1140.50px;height:56px;line-height:56px;font-size:28px;font-weight:normal;color:#40454d;letter-spacing:-0.135px;-webkit-text-stroke:0.4px #40454d;">02.11.25</div>
<div class="t" style="left:2798.70px;top:1185.50px;height:48px;line-height:48px;font-size:24px;font-weight:normal;color:#585e68;letter-spacing:0.747px;-webkit-text-stroke:0.4px #585e68;">15:49</div>
<div class="t" style="left:2972.20px;top:1140.50px;height:56px;line-height:56px;font-size:28px;font-weight:normal;color:#40454d;letter-spacing:-0.135px;-webkit-text-stroke:0.4px #40454d;">02.11.25</div>
<div class="t" style="left:2972.20px;top:1185.50px;height:48px;line-height:48px;font-size:24px;font-weight:normal;color:#585e68;letter-spacing:0.747px;-webkit-text-stroke:0.4px #585e68;">15:49</div>
<svg style="position:absolute;left:3162px;top:1167.5px;overflow:visible" width="40" height="40" viewBox="0 0 24 24" fill="none" stroke="#4f44de" stroke-width="1.45" stroke-linecap="round" stroke-linejoin="round"><path d="m16.862 4.487 1.687-1.688a1.875 1.875 0 1 1 2.652 2.652L10.582 16.07a4.5 4.5 0 0 1-1.897 1.13L6 18l.8-2.685a4.5 4.5 0 0 1 1.13-1.897l8.932-8.931Zm0 0L19.5 7.125M18 14v4.75A2.25 2.25 0 0 1 15.75 21H5.25A2.25 2.25 0 0 1 3 18.75V8.25A2.25 2.25 0 0 1 5.25 6H10"/></svg>
<svg style="position:absolute;left:0;top:0;overflow:visible" width="1" height="1" fill="none" stroke="#c9372f" stroke-width="2.3" stroke-linecap="round" stroke-linejoin="round"><path d="M3256 1178H3284"/><path d="M3258.8 1178L3260.6 1201.5A3.5 3.5 0 0 0 3264.1 1204.6H3276.2A3.5 3.5 0 0 0 3279.7 1201.5L3281.6 1178"/><path d="M3263.6 1177.5V1174.5A3.3 3.3 0 0 1 3266.9 1171.4H3273.5A3.3 3.3 0 0 1 3276.8 1174.5V1177.5"/><path d="M3265.6 1183L3266.1 1197.8M3274.6 1183L3274.1 1197.8"/></svg>
<div style="position:absolute;left:599.6px;top:1406px;width:2735.2000000000003px;height:2px;background:#e7e8eb"></div>
<div style="position:absolute;left:632px;top:1321.4px;width:32px;height:31.5px;border:2px solid #626368;box-sizing:border-box;border-radius:1px;background:#fff"></div>
<div class="t" style="left:687.50px;top:1306.30px;height:56px;line-height:56px;font-size:28px;font-weight:normal;color:#40454d;letter-spacing:0.000px;-webkit-text-stroke:0.4px #40454d;">6</div>
<div class="t" style="left:835.00px;top:1285.90px;height:56px;line-height:56px;font-size:28px;font-weight:normal;color:#3b60d2;letter-spacing:0.714px;-webkit-text-stroke:0.4px #3b60d2;">Kirschlorbeer</div>
<div class="t" style="left:835.00px;top:1326.60px;height:56px;line-height:56px;font-size:28px;font-weight:normal;color:#141414;letter-spacing:0.411px;-webkit-text-stroke:0.4px #141414;">Prunus laurocerasus</div>
<div style="position:absolute;left:1202.3px;top:1315.3px;width:261.7px;height:39.4px;background:#dde6f7;border-radius:8px"></div>
<div class="t" style="left:1217.40px;top:1310.50px;height:48px;line-height:48px;font-size:24px;font-weight:normal;color:#2c3c8e;letter-spacing:0.555px;-webkit-text-stroke:0.4px #2c3c8e;">Prunus laurocerasus</div>
<div class="t" style="left:1560.40px;top:1306.50px;height:56px;line-height:56px;font-size:28px;font-weight:normal;color:#40454d;letter-spacing:0.959px;-webkit-text-stroke:0.4px #40454d;">40 – 60</div>
<div class="t" style="left:1751.50px;top:1306.50px;height:56px;line-height:56px;font-size:28px;font-weight:normal;color:#40454d;letter-spacing:0.379px;-webkit-text-stroke:0.4px #40454d;">C5</div>
<div class="t" style="left:1995.90px;top:1306.50px;height:56px;line-height:56px;font-size:28px;font-weight:normal;color:#40454d;letter-spacing:0.342px;-webkit-text-stroke:0.4px #40454d;">10,50 €</div>
<div class="t" style="left:2158.20px;top:1306.50px;height:56px;line-height:56px;font-size:28px;font-weight:normal;color:#40454d;letter-spacing:0.028px;-webkit-text-stroke:0.4px #40454d;">100</div>
<div style="position:absolute;left:2304.2px;top:1312px;width:79.6px;height:47px;background:#e4e5e9;border-radius:24px"></div>
<div style="position:absolute;left:2304.2px;top:1312.2px;width:47.5px;height:47px;background:#fff;border:2.2px solid #66666b;border-radius:50%;box-sizing:border-box"></div>
<div style="position:absolute;left:2467px;top:1310px;width:262px;height:47.5px;background:#dcfbe5;border-radius:10px"></div>
<div class="t" style="left:2491.68px;top:1309.30px;height:48px;line-height:48px;font-size:24px;font-weight:normal;color:#52665c;letter-spacing:0.930px;-webkit-text-stroke:0.55px #52665c;">Lieferanten zeigen</div>
<div class="t" style="left:2798.70px;top:1286.50px;height:56px;line-height:56px;font-size:28px;font-weight:normal;color:#40454d;letter-spacing:-0.135px;-webkit-text-stroke:0.4px #40454d;">02.11.25</div>
<div class="t" style="left:2798.70px;top:1331.50px;height:48px;line-height:48px;font-size:24px;font-weight:normal;color:#585e68;letter-spacing:0.747px;-webkit-text-stroke:0.4px #585e68;">15:49</div>
<div class="t" style="left:2972.20px;top:1286.50px;height:56px;line-height:56px;font-size:28px;font-weight:normal;color:#40454d;letter-spacing:-0.135px;-webkit-text-stroke:0.4px #40454d;">02.11.25</div>
<div class="t" style="left:2972.20px;top:1331.50px;height:48px;line-height:48px;font-size:24px;font-weight:normal;color:#585e68;letter-spacing:0.747px;-webkit-text-stroke:0.4px #585e68;">15:49</div>
<svg style="position:absolute;left:3162px;top:1313.5px;overflow:visible" width="40" height="40" viewBox="0 0 24 24" fill="none" stroke="#4f44de" stroke-width="1.45" stroke-linecap="round" stroke-linejoin="round"><path d="m16.862 4.487 1.687-1.688a1.875 1.875 0 1 1 2.652 2.652L10.582 16.07a4.5 4.5 0 0 1-1.897 1.13L6 18l.8-2.685a4.5 4.5 0 0 1 1.13-1.897l8.932-8.931Zm0 0L19.5 7.125M18 14v4.75A2.25 2.25 0 0 1 15.75 21H5.25A2.25 2.25 0 0 1 3 18.75V8.25A2.25 2.25 0 0 1 5.25 6H10"/></svg>
<svg style="position:absolute;left:0;top:0;overflow:visible" width="1" height="1" fill="none" stroke="#c9372f" stroke-width="2.3" stroke-linecap="round" stroke-linejoin="round"><path d="M3256 1324H3284"/><path d="M3258.8 1324L3260.6 1347.5A3.5 3.5 0 0 0 3264.1 1350.6H3276.2A3.5 3.5 0 0 0 3279.7 1347.5L3281.6 1324"/><path d="M3263.6 1323.5V1320.5A3.3 3.3 0 0 1 3266.9 1317.4H3273.5A3.3 3.3 0 0 1 3276.8 1320.5V1323.5"/><path d="M3265.6 1329L3266.1 1343.8M3274.6 1329L3274.1 1343.8"/></svg>
<div style="position:absolute;left:599.6px;top:1552px;width:2735.2000000000003px;height:2px;background:#e7e8eb"></div>
<div style="position:absolute;left:632px;top:1467.4px;width:32px;height:31.5px;border:2px solid #626368;box-sizing:border-box;border-radius:1px;background:#fff"></div>
<div class="t" style="left:687.50px;top:1452.30px;height:56px;line-height:56px;font-size:28px;font-weight:normal;color:#40454d;letter-spacing:0.000px;-webkit-text-stroke:0.4px #40454d;">7</div>
<div class="t" style="left:835.00px;top:1431.90px;height:56px;line-height:56px;font-size:28px;font-weight:normal;color:#3b60d2;letter-spacing:0.714px;-webkit-text-stroke:0.4px #3b60d2;">Kirschlorbeer</div>
<div class="t" style="left:835.00px;top:1472.60px;height:56px;line-height:56px;font-size:28px;font-weight:normal;color:#141414;letter-spacing:0.411px;-webkit-text-stroke:0.4px #141414;">Prunus laurocerasus</div>
<div style="position:absolute;left:1202.3px;top:1461.3px;width:261.7px;height:39.4px;background:#dde6f7;border-radius:8px"></div>
<div class="t" style="left:1217.40px;top:1456.50px;height:48px;line-height:48px;font-size:24px;font-weight:normal;color:#2c3c8e;letter-spacing:0.555px;-webkit-text-stroke:0.4px #2c3c8e;">Prunus laurocerasus</div>
<div class="t" style="left:1559.40px;top:1452.50px;height:56px;line-height:56px;font-size:28px;font-weight:normal;color:#40454d;letter-spacing:1.125px;-webkit-text-stroke:0.4px #40454d;">60 – 80</div>
<div class="t" style="left:1751.50px;top:1452.50px;height:56px;line-height:56px;font-size:28px;font-weight:normal;color:#40454d;letter-spacing:-0.924px;-webkit-text-stroke:0.4px #40454d;">C7.5</div>
<div class="t" style="left:1995.90px;top:1452.50px;height:56px;line-height:56px;font-size:28px;font-weight:normal;color:#40454d;letter-spacing:0.342px;-webkit-text-stroke:0.4px #40454d;">10,50 €</div>
<div class="t" style="left:2158.20px;top:1452.50px;height:56px;line-height:56px;font-size:28px;font-weight:normal;color:#40454d;letter-spacing:0.028px;-webkit-text-stroke:0.4px #40454d;">100</div>
<div style="position:absolute;left:2304.2px;top:1458px;width:79.6px;height:47px;background:#e4e5e9;border-radius:24px"></div>
<div style="position:absolute;left:2304.2px;top:1458.2px;width:47.5px;height:47px;background:#fff;border:2.2px solid #66666b;border-radius:50%;box-sizing:border-box"></div>
<div style="position:absolute;left:2467px;top:1456px;width:262px;height:47.5px;background:#dcfbe5;border-radius:10px"></div>
<div class="t" style="left:2491.68px;top:1455.30px;height:48px;line-height:48px;font-size:24px;font-weight:normal;color:#52665c;letter-spacing:0.930px;-webkit-text-stroke:0.55px #52665c;">Lieferanten zeigen</div>
<div class="t" style="left:2798.70px;top:1432.50px;height:56px;line-height:56px;font-size:28px;font-weight:normal;color:#40454d;letter-spacing:-0.135px;-webkit-text-stroke:0.4px #40454d;">02.11.25</div>
<div class="t" style="left:2798.70px;top:1477.50px;height:48px;line-height:48px;font-size:24px;font-weight:normal;color:#585e68;letter-spacing:0.747px;-webkit-text-stroke:0.4px #585e68;">15:49</div>
<div class="t" style="left:2972.20px;top:1432.50px;height:56px;line-height:56px;font-size:28px;font-weight:normal;color:#40454d;letter-spacing:-0.135px;-webkit-text-stroke:0.4px #40454d;">02.11.25</div>
<div class="t" style="left:2972.20px;top:1477.50px;height:48px;line-height:48px;font-size:24px;font-weight:normal;color:#585e68;letter-spacing:0.747px;-webkit-text-stroke:0.4px #585e68;">15:49</div>
<svg style="position:absolute;left:3162px;top:1459.5px;overflow:visible" width="40" height="40" viewBox="0 0 24 24" fill="none" stroke="#4f44de" stroke-width="1.45" stroke-linecap="round" stroke-linejoin="round"><path d="m16.862 4.487 1.687-1.688a1.875 1.875 0 1 1 2.652 2.652L10.582 16.07a4.5 4.5 0 0 1-1.897 1.13L6 18l.8-2.685a4.5 4.5 0 0 1 1.13-1.897l8.932-8.931Zm0 0L19.5 7.125M18 14v4.75A2.25 2.25 0 0 1 15.75 21H5.25A2.25 2.25 0 0 1 3 18.75V8.25A2.25 2.25 0 0 1 5.25 6H10"/></svg>
<svg style="position:absolute;left:0;top:0;overflow:visible" width="1" height="1" fill="none" stroke="#c9372f" stroke-width="2.3" stroke-linecap="round" stroke-linejoin="round"><path d="M3256 1470H3284"/><path d="M3258.8 1470L3260.6 1493.5A3.5 3.5 0 0 0 3264.1 1496.6H3276.2A3.5 3.5 0 0 0 3279.7 1493.5L3281.6 1470"/><path d="M3263.6 1469.5V1466.5A3.3 3.3 0 0 1 3266.9 1463.4H3273.5A3.3 3.3 0 0 1 3276.8 1466.5V1469.5"/><path d="M3265.6 1475L3266.1 1489.8M3274.6 1475L3274.1 1489.8"/></svg>
<div style="position:absolute;left:599.6px;top:1698px;width:2735.2000000000003px;height:2px;background:#e7e8eb"></div>
<div style="position:absolute;left:632px;top:1613.4px;width:32px;height:31.5px;border:2px solid #626368;box-sizing:border-box;border-radius:1px;background:#fff"></div>
<div class="t" style="left:687.50px;top:1598.30px;height:56px;line-height:56px;font-size:28px;font-weight:normal;color:#40454d;letter-spacing:0.000px;-webkit-text-stroke:0.4px #40454d;">8</div>
<div class="t" style="left:835.00px;top:1577.90px;height:56px;line-height:56px;font-size:28px;font-weight:normal;color:#3b60d2;letter-spacing:0.714px;-webkit-text-stroke:0.4px #3b60d2;">Kirschlorbeer</div>
<div class="t" style="left:835.00px;top:1618.60px;height:56px;line-height:56px;font-size:28px;font-weight:normal;color:#141414;letter-spacing:0.411px;-webkit-text-stroke:0.4px #141414;">Prunus laurocerasus</div>
<div style="position:absolute;left:1202.3px;top:1607.3px;width:261.7px;height:39.4px;background:#dde6f7;border-radius:8px"></div>
<div class="t" style="left:1217.40px;top:1602.50px;height:48px;line-height:48px;font-size:24px;font-weight:normal;color:#2c3c8e;letter-spacing:0.555px;-webkit-text-stroke:0.4px #2c3c8e;">Prunus laurocerasus</div>
<div class="t" style="left:1559.40px;top:1598.50px;height:56px;line-height:56px;font-size:28px;font-weight:normal;color:#40454d;letter-spacing:0.411px;-webkit-text-stroke:0.4px #40454d;">80 – 100</div>
<div class="t" style="left:1751.50px;top:1598.50px;height:56px;line-height:56px;font-size:28px;font-weight:normal;color:#40454d;letter-spacing:0.485px;-webkit-text-stroke:0.4px #40454d;">3xv mB</div>
<div class="t" style="left:1995.90px;top:1598.50px;height:56px;line-height:56px;font-size:28px;font-weight:normal;color:#40454d;letter-spacing:0.342px;-webkit-text-stroke:0.4px #40454d;">10,50 €</div>
<div class="t" style="left:2158.20px;top:1598.50px;height:56px;line-height:56px;font-size:28px;font-weight:normal;color:#40454d;letter-spacing:0.028px;-webkit-text-stroke:0.4px #40454d;">100</div>
<div style="position:absolute;left:2304.2px;top:1604px;width:79.6px;height:47px;background:#e4e5e9;border-radius:24px"></div>
<div style="position:absolute;left:2304.2px;top:1604.2px;width:47.5px;height:47px;background:#fff;border:2.2px solid #66666b;border-radius:50%;box-sizing:border-box"></div>
<div style="position:absolute;left:2467px;top:1602px;width:262px;height:47.5px;background:#dcfbe5;border-radius:10px"></div>
<div class="t" style="left:2491.68px;top:1601.30px;height:48px;line-height:48px;font-size:24px;font-weight:normal;color:#52665c;letter-spacing:0.930px;-webkit-text-stroke:0.55px #52665c;">Lieferanten zeigen</div>
<div class="t" style="left:2798.70px;top:1578.50px;height:56px;line-height:56px;font-size:28px;font-weight:normal;color:#40454d;letter-spacing:-0.135px;-webkit-text-stroke:0.4px #40454d;">02.11.25</div>
<div class="t" style="left:2798.70px;top:1623.50px;height:48px;line-height:48px;font-size:24px;font-weight:normal;color:#585e68;letter-spacing:0.747px;-webkit-text-stroke:0.4px #585e68;">15:49</div>
<div class="t" style="left:2972.20px;top:1578.50px;height:56px;line-height:56px;font-size:28px;font-weight:normal;color:#40454d;letter-spacing:-0.135px;-webkit-text-stroke:0.4px #40454d;">02.11.25</div>
<div class="t" style="left:2972.20px;top:1623.50px;height:48px;line-height:48px;font-size:24px;font-weight:normal;color:#585e68;letter-spacing:0.747px;-webkit-text-stroke:0.4px #585e68;">15:49</div>
<svg style="position:absolute;left:3162px;top:1605.5px;overflow:visible" width="40" height="40" viewBox="0 0 24 24" fill="none" stroke="#4f44de" stroke-width="1.45" stroke-linecap="round" stroke-linejoin="round"><path d="m16.862 4.487 1.687-1.688a1.875 1.875 0 1 1 2.652 2.652L10.582 16.07a4.5 4.5 0 0 1-1.897 1.13L6 18l.8-2.685a4.5 4.5 0 0 1 1.13-1.897l8.932-8.931Zm0 0L19.5 7.125M18 14v4.75A2.25 2.25 0 0 1 15.75 21H5.25A2.25 2.25 0 0 1 3 18.75V8.25A2.25 2.25 0 0 1 5.25 6H10"/></svg>
<svg style="position:absolute;left:0;top:0;overflow:visible" width="1" height="1" fill="none" stroke="#c9372f" stroke-width="2.3" stroke-linecap="round" stroke-linejoin="round"><path d="M3256 1616H3284"/><path d="M3258.8 1616L3260.6 1639.5A3.5 3.5 0 0 0 3264.1 1642.6H3276.2A3.5 3.5 0 0 0 3279.7 1639.5L3281.6 1616"/><path d="M3263.6 1615.5V1612.5A3.3 3.3 0 0 1 3266.9 1609.4H3273.5A3.3 3.3 0 0 1 3276.8 1612.5V1615.5"/><path d="M3265.6 1621L3266.1 1635.8M3274.6 1621L3274.1 1635.8"/></svg>
</body></html>
